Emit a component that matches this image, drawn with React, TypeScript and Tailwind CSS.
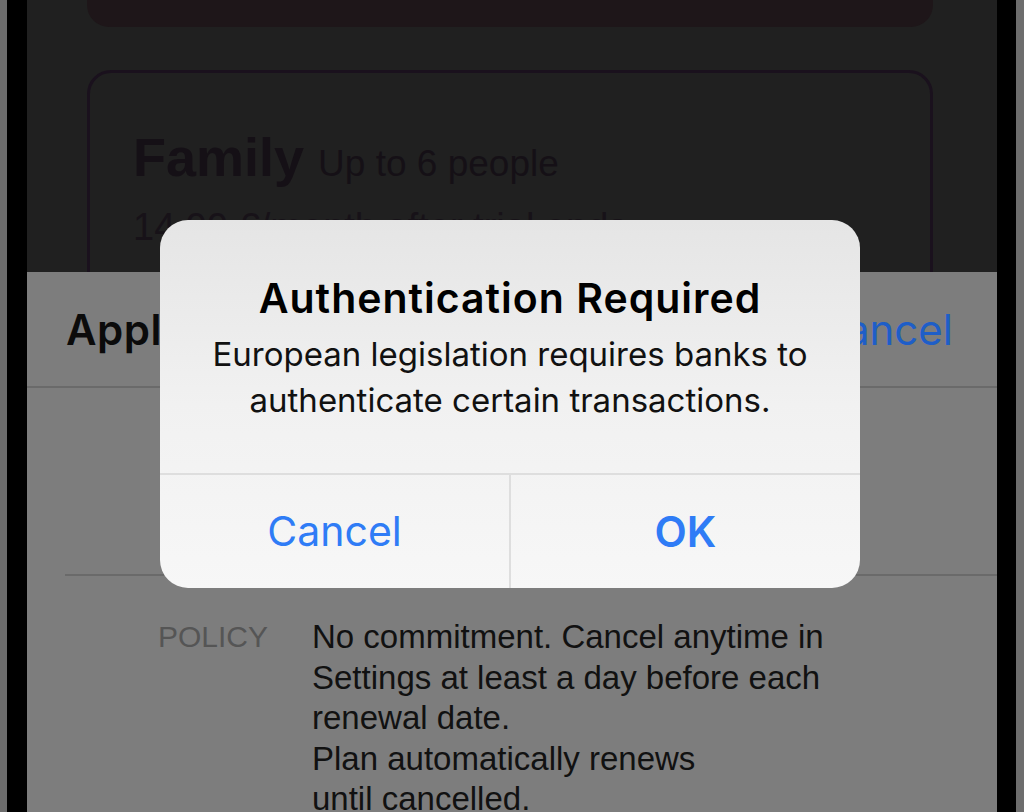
import React from "react";

const inter = { fontFamily: "Inter, 'Noto Sans', 'Liberation Sans', sans-serif" };
const arial = { fontFamily: "'Liberation Sans', Arial, sans-serif" };

export default function App() {
  return (
    <div className="relative w-[1024px] h-[812px] overflow-hidden flex bg-[#6f6f6f]" style={inter}>
      <div className="w-[7px] bg-[#6d6d6d]" />
      <div className="w-[20px] bg-black" />
      <div className="flex-1 flex flex-col overflow-hidden">
        {/* dimmed top content */}
        <div className="h-[272px] shrink-0 bg-[#202020] overflow-hidden flex flex-col">
          <div className="h-[27px] ml-[60px] mr-[64px] rounded-b-[22px] bg-[#1e1619] shrink-0" />
          <div className="mt-[43px] ml-[60px] mr-[64px] h-[260px] rounded-[24px] border-[3px] border-[#1a111d] shrink-0 pl-[43px] pt-[54px]" style={arial}>
            <div className="flex items-baseline gap-[14px] text-[#151016]">
              <span className="text-[54px] font-bold leading-[60px]">Family</span>
              <span className="text-[37px] leading-[44px]">Up to 6 people</span>
            </div>
            <div className="mt-[18px] text-[38px] leading-[44px] text-[#171218]">14,99 €/month after trial ends</div>
          </div>
        </div>
        {/* dimmed sheet */}
        <div className="flex-1 bg-[#7d7d7d] flex flex-col">
          <div className="h-[116px] shrink-0 flex items-center justify-between pl-[39px] pr-[44px] border-b-2 border-[#6a6a6a]">
            <span className="text-[42px] font-semibold text-[#0b0b0b] tracking-[0.5px]">Apple Pay</span>
            <span className="text-[42px] text-[#1e5ec8]">Cancel</span>
          </div>
          <div className="h-[188px] shrink-0 ml-[38px] border-b-2 border-[#6a6a6a]" />
          <div className="flex pl-[131px] pt-[41px]" style={arial}>
            <div className="w-[154px] text-[30px] leading-[40.5px] text-[#555555]">POLICY</div>
            <div className="text-[33px] leading-[40.5px] text-[#111111]">
              <div>No commitment. Cancel anytime in</div>
              <div>Settings at least a day before each</div>
              <div>renewal date.</div>
              <div>Plan automatically renews</div>
              <div>until cancelled.</div>
            </div>
          </div>
        </div>
      </div>
      <div className="w-[19px] bg-black" />
      <div className="w-[8px] bg-[#6d6d6d]" />

      {/* alert */}
      <div className="absolute left-[160px] top-[220px] w-[700px] h-[368px] rounded-[28px] overflow-hidden bg-gradient-to-b from-[#e5e5e5] via-[#f1f1f1] to-[#f7f7f7] flex flex-col">
        <div className="flex-1 flex flex-col items-center pt-[54px] text-center">
          <div className="text-[41px] font-semibold leading-[48px] text-black tracking-[1px] whitespace-nowrap">Authentication Required</div>
          <div className="mt-[9px] text-[33px] leading-[46px] text-[#111] whitespace-nowrap">
            European legislation requires banks to
            <br />
            authenticate certain transactions.
          </div>
        </div>
        <div className="h-[115px] shrink-0 flex border-t-2 border-[#dedede]">
          <div className="w-[351px] flex items-center justify-center text-[41px] text-[#2f7cf6] border-r-2 border-[#dedede]">Cancel</div>
          <div className="flex-1 flex items-center justify-center text-[42px] font-semibold text-[#2f7cf6]">OK</div>
        </div>
      </div>
    </div>
  );
}
